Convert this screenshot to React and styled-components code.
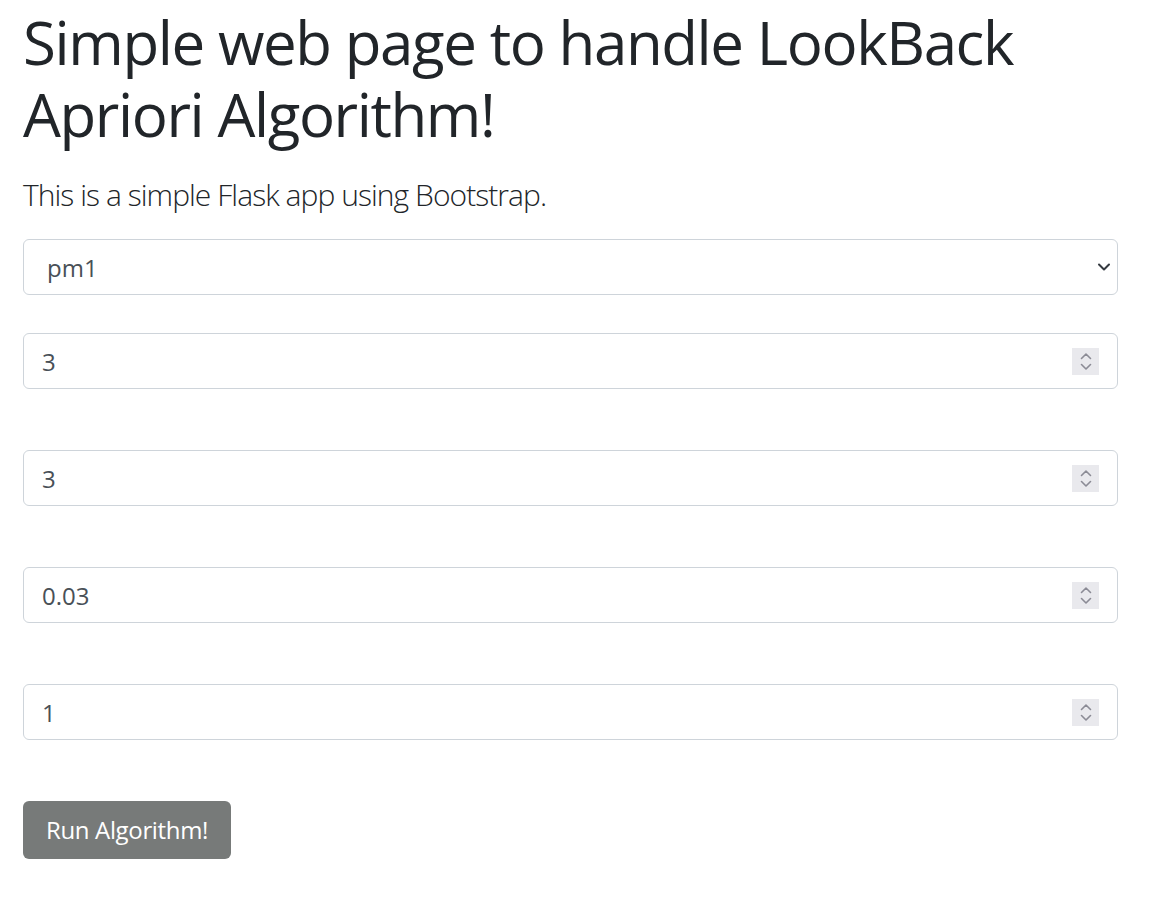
import React from 'react';
import styled, { createGlobalStyle } from 'styled-components';

const GlobalStyle = createGlobalStyle`
  body {
    margin: 0;
    background: #fff;
    color: #212529;
    font-family: 'Open Sans', 'Noto Sans', sans-serif;
  }
`;

function Chevron({ up }) {
  return (
    <svg width='12' height='8' viewBox='0 0 12 8'>
      <path
        d={up ? 'M1.5 6.5 L6 2 L10.5 6.5' : 'M1.5 1.5 L6 6 L10.5 1.5'}
        fill='none'
        stroke='currentColor'
        strokeWidth='1.6'
        strokeLinecap='round'
        strokeLinejoin='round'
      />
    </svg>
  );
}

function NumberField({ value }) {
  return (
    <Field>
      <Input type='text' defaultValue={value} />
      <Spinner>
        <Chevron up />
        <Chevron />
      </Spinner>
    </Field>
  );
}

function App() {
  return (
    <>
      <GlobalStyle />
      <Container>
        <Title>Simple web page to handle LookBack Apriori Algorithm!</Title>
        <Lead>This is a simple Flask app using Bootstrap.</Lead>
        <Form onSubmit={(e) => e.preventDefault()}>
          <SelectField>
            <Select defaultValue='pm1'>
              <option value='pm1'>pm1</option>
              <option value='pm2'>pm2</option>
            </Select>
            <SelectArrow>
              <svg width='14' height='10' viewBox='0 0 14 10'>
                <path
                  d='M2 2.5 L7 7.5 L12 2.5'
                  fill='none'
                  stroke='#343a40'
                  strokeWidth='2'
                  strokeLinecap='round'
                  strokeLinejoin='round'
                />
              </svg>
            </SelectArrow>
          </SelectField>
          <NumberField value='3' />
          <NumberField value='3' />
          <NumberField value='0.03' />
          <NumberField value='1' />
          <Button type='submit'>Run Algorithm!</Button>
        </Form>
      </Container>
    </>
  );
}

const Container = styled.div`
  padding: 0 34px 0 23px;
`;

const Title = styled.h1`
  margin: 0 0 22px;
  padding-top: 6px;
  font-size: 60px;
  font-weight: 400;
  line-height: 72px;
  letter-spacing: -1.4px;
  color: #212529;
`;

const Lead = styled.p`
  margin: 0 0 22px;
  font-size: 30px;
  font-weight: 300;
  line-height: 45px;
  letter-spacing: -0.95px;
  color: #212529;
`;

const Form = styled.form`
  display: flex;
  flex-direction: column;
  align-items: flex-start;
`;

const SelectField = styled.div`
  position: relative;
  box-sizing: border-box;
  width: 100%;
  height: 56px;
  margin-bottom: 38px;
  border: 1px solid #ced4da;
  border-radius: 6px;
  display: flex;
  align-items: center;
`;

const Select = styled.select`
  appearance: none;
  border: 0;
  outline: none;
  background: transparent;
  flex: 1;
  height: 100%;
  padding: 0 18px 0 23px;
  font-family: inherit;
  font-size: 24px;
  color: #495057;
`;

const SelectArrow = styled.span`
  position: absolute;
  right: 6px;
  top: 50%;
  transform: translateY(-50%);
  display: flex;
  pointer-events: none;
`;

const Field = styled.div`
  box-sizing: border-box;
  width: 100%;
  height: 56px;
  margin-bottom: 61px;
  border: 1px solid #ced4da;
  border-radius: 6px;
  display: flex;
  align-items: center;
  padding: 0 18px 0 18px;
`;

const Input = styled.input`
  flex: 1;
  min-width: 0;
  border: 0;
  outline: none;
  background: transparent;
  padding: 0;
  font-family: inherit;
  font-size: 24px;
  color: #495057;
`;

const Spinner = styled.span`
  width: 27px;
  height: 27px;
  background: #e9e9ed;
  color: #8b8b95;
  display: flex;
  flex-direction: column;
  align-items: center;
  justify-content: center;
  gap: 3px;
`;

const Button = styled.button`
  border: 0;
  border-radius: 6px;
  background: #777a79;
  color: #fff;
  font-family: inherit;
  font-size: 24px;
  line-height: 36px;
  letter-spacing: -0.35px;
  padding: 11px 23px;
  cursor: pointer;
`;

export default App;
